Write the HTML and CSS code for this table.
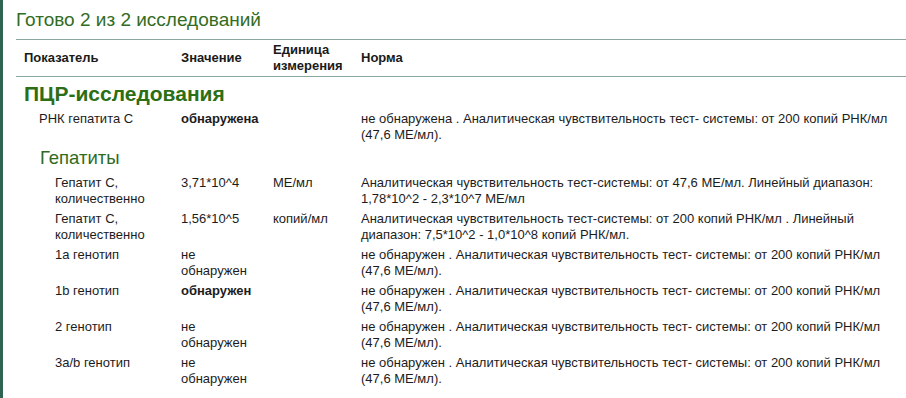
FILE: index.html
```html
<!DOCTYPE html>
<html lang="ru">
<head>
<meta charset="utf-8">
<title>Результаты исследований</title>
<link rel="stylesheet" href="styles.css">
</head>
<body>
<div class="page">
  <h1 class="title">Готово 2 из 2 исследований</h1>
  <table class="results">
    <colgroup>
      <col class="c-name">
      <col class="c-value">
      <col class="c-unit">
      <col class="c-norm">
    </colgroup>
    <thead>
      <tr>
        <th>Показатель</th>
        <th>Значение</th>
        <th>Единица измерения</th>
        <th>Норма</th>
      </tr>
    </thead>
    <tbody>
      <tr class="group"><td colspan="4">ПЦР-исследования</td></tr>
      <tr class="row lvl1">
        <td>РНК гепатита С</td>
        <td class="strong">обнаружена</td>
        <td></td>
        <td>не обнаружена . Аналитическая чувствительность тест- системы: от 200 копий РНК/мл (47,6 МЕ/мл).</td>
      </tr>
      <tr class="subgroup"><td colspan="4">Гепатиты</td></tr>
      <tr class="row lvl2">
        <td>Гепатит С, количественно</td>
        <td>3,71*10^4</td>
        <td>МЕ/мл</td>
        <td>Аналитическая чувствительность тест-системы: от 47,6 МЕ/мл. Линейный диапазон: 1,78*10^2 - 2,3*10^7 МЕ/мл</td>
      </tr>
      <tr class="row lvl2">
        <td>Гепатит С, количественно</td>
        <td>1,56*10^5</td>
        <td>копий/мл</td>
        <td>Аналитическая чувствительность тест-системы: от 200 копий РНК/мл . Линейный диапазон: 7,5*10^2 - 1,0*10^8 копий РНК/мл.</td>
      </tr>
      <tr class="row lvl2">
        <td>1a генотип</td>
        <td>не обнаружен</td>
        <td></td>
        <td>не обнаружен . Аналитическая чувствительность тест- системы: от 200 копий РНК/мл (47,6 МЕ/мл).</td>
      </tr>
      <tr class="row lvl2">
        <td>1b генотип</td>
        <td class="strong">обнаружен</td>
        <td></td>
        <td>не обнаружен . Аналитическая чувствительность тест- системы: от 200 копий РНК/мл (47,6 МЕ/мл).</td>
      </tr>
      <tr class="row lvl2">
        <td>2 генотип</td>
        <td>не обнаружен</td>
        <td></td>
        <td>не обнаружен . Аналитическая чувствительность тест- системы: от 200 копий РНК/мл (47,6 МЕ/мл).</td>
      </tr>
      <tr class="row lvl2">
        <td>3a/b генотип</td>
        <td>не обнаружен</td>
        <td></td>
        <td>не обнаружен . Аналитическая чувствительность тест- системы: от 200 копий РНК/мл (47,6 МЕ/мл).</td>
      </tr>
    </tbody>
  </table>
</div>
</body>
</html>
```
FILE: styles.css
```css
html, body {
  margin: 0;
  padding: 0;
  background: #ffffff;
}

body {
  font-family: "Liberation Sans", Arial, sans-serif;
  font-size: 13px;
  color: #1c1c1c;
}

.page {
  border-left: 3px solid #2d6350;
  padding-left: 13px;
  min-height: 398px;
  box-sizing: border-box;
}

.title {
  margin: 0;
  padding-top: 8px;
  padding-bottom: 7px;
  font-size: 19px;
  line-height: 24px;
  font-weight: normal;
  color: #336c22;
}

.results {
  width: 890px;
  border-collapse: collapse;
  table-layout: fixed;
}

.c-name { width: 157px; }
.c-value { width: 92px; }
.c-unit { width: 88px; }
.c-norm { width: 553px; }

.results th {
  text-align: left;
  font-weight: bold;
  font-size: 13px;
  line-height: 16px;
  color: #1a1a1a;
  padding: 2px 8px;
  vertical-align: middle;
  border-top: 1px solid #8aa6a0;
  border-bottom: 1px solid #8aa6a0;
}

.results td {
  padding: 2px 8px;
  line-height: 16px;
  vertical-align: top;
}

.results td:last-child,
.results th:last-child {
  padding-right: 0;
}

.group td {
  padding: 5px 8px 0;
  font-size: 21px;
  line-height: 24px;
  font-weight: bold;
  color: #2b6e14;
}

.subgroup td {
  padding: 2px 8px 4px 24px;
  font-size: 18.5px;
  line-height: 22px;
  color: #2f6b1e;
}

.lvl1 td {
  padding-top: 5px;
}

.lvl1 td:first-child {
  padding-left: 23px;
}

.lvl2 td:first-child {
  padding-left: 39px;
}

.strong {
  font-weight: bold;
}
```
